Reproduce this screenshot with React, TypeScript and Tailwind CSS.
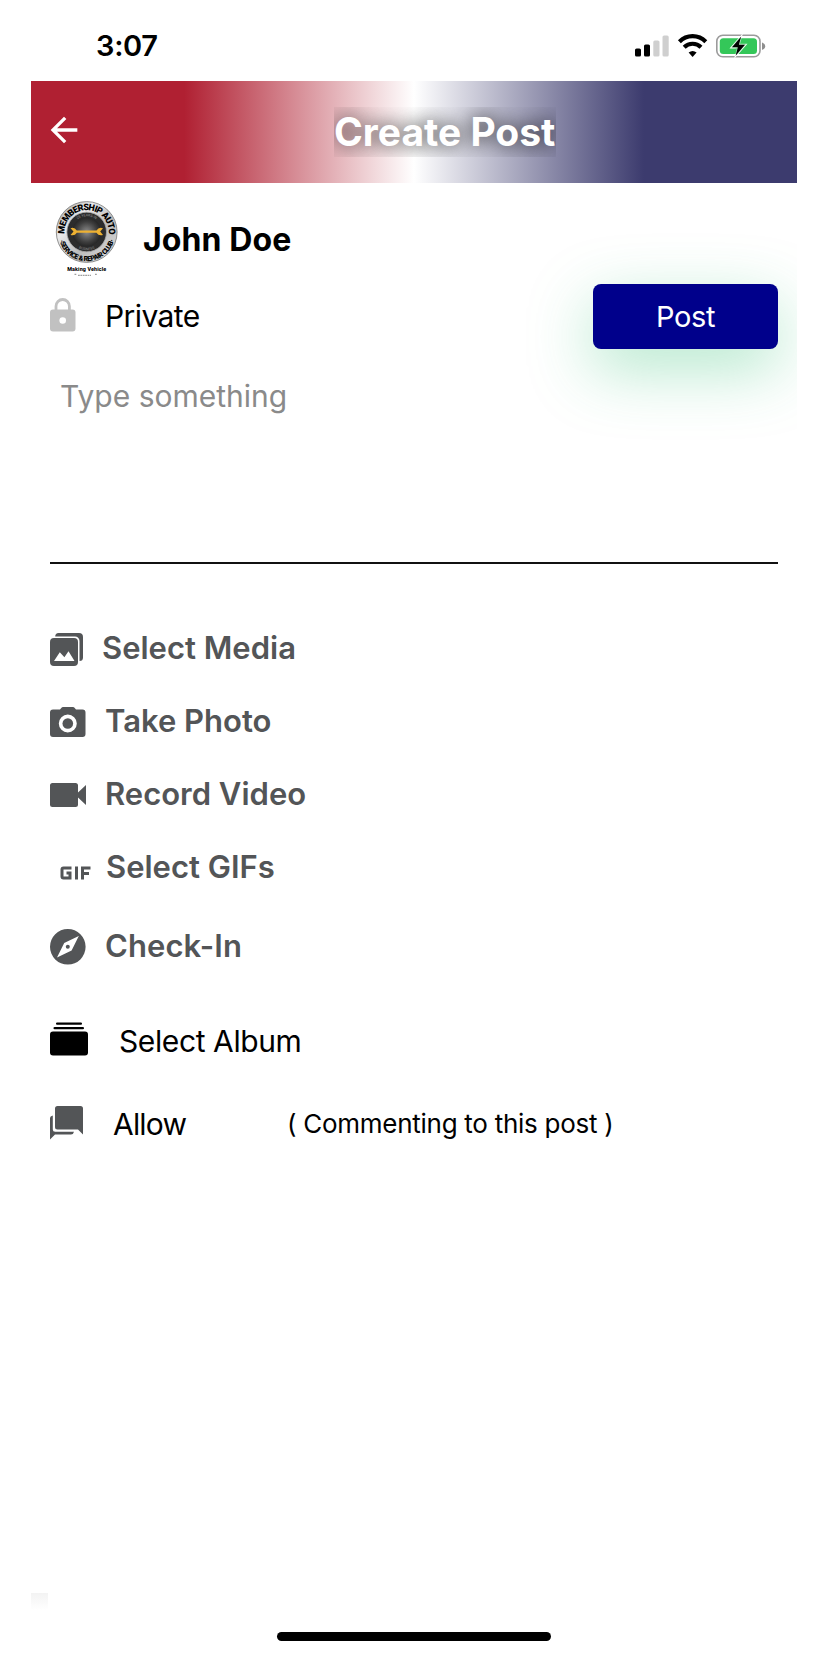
import type { ReactNode } from "react";
import { MdArrowBack } from "react-icons/md";

type Action = {
  label: string;
  icon: ReactNode;
  row: string;
  text: string;
};

const ACTIONS: Action[] = [
  { label: "Select Media", icon: <MediaIcon />, row: "h-[73px]", text: "ml-[18px]" },
  { label: "Take Photo", icon: <CameraIcon />, row: "h-[73px]", text: "ml-[19px]" },
  { label: "Record Video", icon: <VideoIcon />, row: "h-[73px]", text: "ml-[18px]" },
  { label: "Select GIFs", icon: <GifIcon />, row: "h-[73px]", text: "ml-[14px]" },
  { label: "Check-In", icon: <CompassIcon />, row: "h-[86px]", text: "ml-[18px] mb-[2px] tracking-[0.1px]" },
];

function MediaIcon() {
  return (
    <svg className="mt-[4px] w-[34px] h-[34px]" viewBox="0 0 34 34" fill="#535557">
      <path d="M8.500 0H29a4 4 0 0 1 4 4V24.500a3.500 3.500 0 0 1-3.500 3.500V8A4.500 4.500 0 0 0 25 3.500H5.200A3.600 3.600 0 0 1 8.500 0z" />
      <path
        fillRule="evenodd"
        d="M4 5H24a4 4 0 0 1 4 4V29a4 4 0 0 1-4 4H4a4 4 0 0 1-4-4V9a4 4 0 0 1 4-4zM4 28H24.500L18.500 18.200 14.400 24.200 9.800 19.200z"
      />
    </svg>
  );
}

function CameraIcon() {
  return (
    <svg className="mt-[3px] w-[36px] h-[32px]" viewBox="0 0 36 32" fill="#535557">
      <path
        fillRule="evenodd"
        d="M13 1H23a2 2 0 0 1 1.500.8L26 3.500H32.500a3 3 0 0 1 3 3V28a3 3 0 0 1-3 3H3a3 3 0 0 1-3-3V6.500a3 3 0 0 1 3-3H10L11.500 1.800A2 2 0 0 1 13 1zM17.800 8.500a9 9 0 1 0 0 18 9 9 0 0 0 0-18z"
      />
      <circle cx="17.800" cy="17.500" r="5.300" />
    </svg>
  );
}

function VideoIcon() {
  return (
    <svg className="mt-[2px] w-[37px] h-[24px]" viewBox="0 0 37 24" fill="#535557">
      <path d="M2.500 0H25.500A2.500 2.500 0 0 1 28 2.500V9.500L36 2V22L28 14.500V21.500A2.500 2.500 0 0 1 25.500 24H2.500A2.500 2.500 0 0 1 0 21.500V2.500A2.500 2.500 0 0 1 2.500 0z" />
    </svg>
  );
}

function GifIcon() {
  return (
    <svg className="ml-[10px] mt-[12px] w-[32px] h-[14px]" viewBox="0 0 32 14" fill="none" stroke="#535557" strokeWidth="3">
      <path d="M11.500 2H3.500Q2 2 2 3.500V10.500Q2 12 3.500 12H10V7H6.500M16.500 .5V13.500M22.500 13.500V2H30.500M22.500 7.500H29" />
    </svg>
  );
}

function CompassIcon() {
  return (
    <svg className="mt-[2px] w-[37px] h-[36px]" viewBox="0 0 37 36" fill="#535557">
      <path
        fillRule="evenodd"
        d="M17.800 0a17.800 17.800 0 1 1 0 35.600 17.800 17.800 0 0 1 0-35.600zM28.800 7L14.200 14 7 28.600 21.600 21.600z"
      />
      <circle cx="17.800" cy="17.800" r="2" />
    </svg>
  );
}

function AlbumIcon() {
  return (
    <svg className="mb-[4px] w-[38px] h-[34px]" viewBox="0 0 38 34" fill="#000">
      <rect x="6" y="0.500" width="26" height="2.300" rx="1.100" />
      <rect x="3.500" y="5" width="30.500" height="2.300" rx="1.100" />
      <rect x="0" y="9.500" width="38" height="24" rx="3" />
    </svg>
  );
}

function CommentsIcon() {
  return (
    <svg className="mb-[4px] w-[34px] h-[34px]" viewBox="0 0 34 34" fill="#535557">
      <path d="M7.500 0H30.500A2.500 2.500 0 0 1 33 2.500V28.500L28 23.500H7.500A2.500 2.500 0 0 1 5 21V2.500A2.500 2.500 0 0 1 7.500 0z" />
      <path d="M2.800 9.500V23.500Q2.800 25.800 5.200 25.800H24Q23.500 28.500 21 28.500H5L0 33.500V12Q0 10 2.800 9.500z" />
    </svg>
  );
}

function LockIcon() {
  return (
    <svg className="mb-[3px] w-[26px] h-[34px]" viewBox="0 0 26 34">
      <path d="M6 13V8.200a6.700 6.700 0 0 1 13.400 0V13" fill="none" stroke="#c1c1c1" strokeWidth="2.800" />
      <rect y="11.500" width="25.500" height="22" rx="3" fill="#c1c1c1" />
      <circle cx="12.700" cy="22.500" r="3.300" fill="#fff" />
    </svg>
  );
}

function StatusIcons() {
  return (
    <svg className="mt-px w-[132px] h-[24px]" viewBox="0 0 132 24">
      <rect x="1" y="14.500" width="6" height="8" rx="1.600" />
      <rect x="10" y="10.500" width="6" height="12" rx="1.600" />
      <rect x="19.300" y="6.500" width="6.200" height="16" rx="1.600" fill="#cfcfcf" />
      <rect x="28.500" y="1.500" width="6.200" height="21" rx="1.600" fill="#cfcfcf" />
      <g fill="none" stroke="#000" strokeWidth="4.100">
        <path d="M45.400 7.700a18.500 18.500 0 0 1 26.400 0" />
        <path d="M50.200 13.300a11.800 11.800 0 0 1 16.800 0" />
      </g>
      <path d="M54.600 18.600a6.600 6.600 0 0 1 8 0L58.600 22.900z" />
      <rect x="82.800" y="1.300" width="43.200" height="21.400" rx="6" fill="none" stroke="#9b9b9b" strokeWidth="1.600" />
      <path d="M128 8.500q3.200 1.200 3.200 3.700t-3.200 3.700z" fill="#8e8e8e" />
      <rect x="85.800" y="4.200" width="37.200" height="15.800" rx="3.500" fill="#34c759" />
      {/* gap the charging bolt cuts through the battery outline */}
      <path d="M109 -1L95.500 14.500H103L100 25 113.500 9.800H106z" fill="#fff" />
      <path d="M97 13.800L105 4.200H108.200L106.500 9.300H113L103.600 20H100.200L102 13.800z" fill="#34c759" opacity="0.350" />
      <path d="M107.200 2.500L98 13.300H103.800L101.600 21.700 111 10.800H104.900z" />
    </svg>
  );
}

function Avatar() {
  return (
    <svg className="w-[64px] h-[80px] shrink-0" viewBox="0 0 64 80" fontFamily="Roboto, sans-serif">
      <defs>
        <linearGradient id="rim" x1="0" y1="0" x2="1" y2="1">
          <stop offset="0" stopColor="#8e8e8e" />
          <stop offset="0.300" stopColor="#ececec" />
          <stop offset="0.600" stopColor="#bcbcbc" />
          <stop offset="1" stopColor="#dedede" />
        </linearGradient>
        <radialGradient id="core">
          <stop offset="0" stopColor="#8c8c8c" />
          <stop offset="0.700" stopColor="#3e3e3e" />
          <stop offset="1" stopColor="#262626" />
        </radialGradient>
        <path id="top" d="M9.600 33.400a22.200 22.200 0 1 1 44.200 0" />
        <path id="bottom" d="M3.300 34a28.500 28.500 0 0 0 56.800 0" />
        <path id="innerTop" d="M16 31a15.700 15.700 0 0 1 31.400 0" />
        <path id="innerBottom" d="M13.500 31a18.200 18.200 0 0 0 36.400 0" />
      </defs>
      <circle cx="31.700" cy="31" r="30.400" fill="url(#rim)" stroke="#777" strokeWidth="0.800" />
      <circle cx="31.700" cy="31" r="19.800" fill="#2c2c2c" stroke="#aaa" strokeWidth="0.800" />
      <circle cx="31.700" cy="31" r="14.500" fill="url(#core)" />
      <text fontSize="9" fontWeight="900" letterSpacing="-0.800" textAnchor="middle">
        <textPath href="#top" startOffset="50%">MEMBERSHIP AUTO</textPath>
      </text>
      <text fontSize="7" fontWeight="900" letterSpacing="-0.500" textAnchor="middle">
        <textPath href="#bottom" startOffset="50%">·SERVICE &amp; REPAIR CLUB·</textPath>
      </text>
      <text fontSize="3.500" fill="#999" textAnchor="middle">
        <textPath href="#innerTop" startOffset="50%">25 YEARS IN</textPath>
      </text>
      <text fontSize="3.500" fill="#888" textAnchor="middle">
        <textPath href="#innerBottom" startOffset="50%">BUSINESS</textPath>
      </text>
      <path
        d="M15.500 27.300q4-1.500 6.300 2.200H41.500q2.300-3.700 6.500-2.200l-2.800 3.200 2.800 3.400q-4.200 1.500-6.500-2.100H21.800q-2.300 3.600-6.300 2.100l3-3.400z"
        fill="#eeb132"
      />
      <text x="31.700" y="69.500" fontSize="5.400" fontWeight="800" textAnchor="middle" textLength="39">
        Making Vehicle
      </text>
      <path d="M19.500 73.300h1.800M23 74.300h13M40 73.300h2" stroke="#888" strokeWidth="1" strokeDasharray="1.800 0.600" />
    </svg>
  );
}

export default function App() {
  return (
    <div className="w-[828px] h-[1656px] flex flex-col bg-white text-black font-[Inter,sans-serif] text-[30px] leading-none overflow-hidden whitespace-nowrap">
      <div className="h-[81px] pt-[33px] pl-[96px] pr-[62px] flex items-start justify-between">
        <span className="text-[29px] leading-[26px] font-semibold tracking-[-0.3px]">3:07</span>
        <StatusIcons />
      </div>

      <main className="ml-[31px] w-[766px] h-[1540px] shrink-0 overflow-hidden flex flex-col">
        <header className="h-[102px] shrink-0 flex items-center bg-[linear-gradient(90deg,#b02032_20%,#fff_50%,#3c3b6e_80%)]">
          <MdArrowBack className="ml-[13px] mb-[4px] w-[40px] h-[40px] text-white" />
          <h1 className="ml-[250px] h-[50px] w-[222px] overflow-hidden text-[39px] leading-[50px] font-bold text-white [text-shadow:0_0_20px_#000000d9]">
            Create Post
          </h1>
        </header>

        <div className="h-[101px] pl-[24px] flex items-start">
          <div className="pt-[18px]">
            <Avatar />
          </div>
          <span className="ml-[24px] mt-[41px] text-[32px] font-bold tracking-[0.1px]">John Doe</span>
        </div>

        <div className="h-[65px] pl-[19px] pr-[19px] flex items-center">
          <LockIcon />
          <span className="ml-[29px] mb-px tracking-[-0.6px]">Private</span>
          <button className="ml-auto w-[185px] h-[65px] rounded-lg bg-[#00008b] text-white text-[29px] tracking-[-0.4px] shadow-[0_20px_64px_#2ebd735e]">
            Post
          </button>
        </div>

        <div className="mx-[19px] h-[215px] border-b-2 border-[#111] pl-[10px] pt-[32px] text-[#8a8a8a]">
          Type something
        </div>

        <div className="mt-[47px] pl-[19px]">
          {ACTIONS.map((a) => (
            <div key={a.label} className={`flex items-center text-[31px] text-[#535557] font-semibold ${a.row}`}>
              {a.icon}
              <span className={a.text}>{a.label}</span>
            </div>
          ))}
          <div className="h-[103px] flex items-center">
            <AlbumIcon />
            <span className="ml-[31px] tracking-[-0.4px]">Select Album</span>
          </div>
          <div className="h-[65px] flex items-center">
            <CommentsIcon />
            <span className="ml-[29px] mb-[2px] w-[174px] tracking-[-0.8px]">Allow</span>
            <span className="text-[26px] mb-px tracking-[-0.27px]">( Commenting to this post )</span>
          </div>
        </div>

        <div className="mt-auto mb-[11px] w-[17px] h-[17px] bg-linear-to-b from-[#f3f3f3] to-white" />
      </main>

      <div className="mt-[11px] ml-[277px] w-[274px] h-[9px] shrink-0 rounded-full bg-black" />
    </div>
  );
}
